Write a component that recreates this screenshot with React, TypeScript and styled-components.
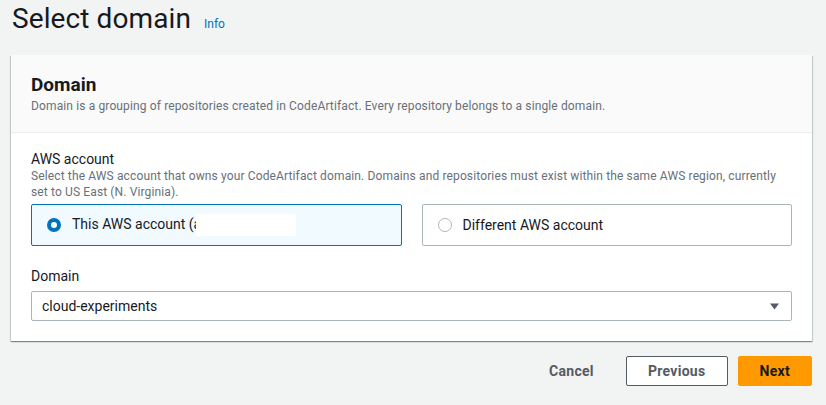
import React from 'react';
import styled, { createGlobalStyle } from 'styled-components';

const GlobalStyle = createGlobalStyle`
  body {
    margin: 0;
    background: #f2f3f3;
    font-family: Roboto, "Noto Sans", "Liberation Sans", sans-serif;
    color: #16191f;
  }
`;

const Page = styled.div`
  padding: 1px 14px 0 11px;
`;

const TitleRow = styled.div`
  display: flex;
  align-items: baseline;
  gap: 13px;
  margin: 0 0 18px 1px;
`;

const Title = styled.h1`
  margin: 0;
  font-size: 28px;
  line-height: 36px;
  font-weight: 400;
  letter-spacing: 0.1px;
  color: #16191f;
`;

const InfoLink = styled.a`
  font-size: 12px;
  color: #0073bb;
  text-decoration: none;
`;

const Card = styled.div`
  background: #ffffff;
  box-shadow: 0 1px 1px 0 rgba(0, 28, 36, 0.3), 1px 1px 1px 0 rgba(0, 28, 36, 0.15),
    -1px 1px 1px 0 rgba(0, 28, 36, 0.15);
`;

const CardHeader = styled.div`
  background: #fafafa;
  border-bottom: 1px solid #eaeded;
  padding: 19px 20px 18px;
`;

const CardTitle = styled.h2`
  margin: 0 0 2px;
  font-size: 19px;
  line-height: 22px;
  font-weight: 700;
`;

const Description = styled.p`
  margin: 0;
  font-size: 12px;
  line-height: 16px;
  letter-spacing: 0.13px;
  color: #687078;
`;

const CardBody = styled.div`
  padding: 17px 20px 20px;
`;

const Field = styled.div<{ $gap?: number }>`
  margin-top: ${({ $gap }) => $gap ?? 0}px;
`;

const Label = styled.div`
  font-size: 14px;
  line-height: 18px;
  color: #16191f;
`;

const Tiles = styled.div`
  display: grid;
  grid-template-columns: 1fr 1fr;
  gap: 20px;
  margin-top: 4px;
`;

const Tile = styled.label<{ $selected?: boolean }>`
  display: flex;
  align-items: center;
  gap: 11px;
  height: 40px;
  padding: 0 15px;
  border: 1px solid ${({ $selected }) => ($selected ? '#0073bb' : '#aab7b8')};
  background: ${({ $selected }) => ($selected ? '#f1faff' : '#ffffff')};
  border-radius: 2px;
  font-size: 14px;
  line-height: 20px;
  color: #16191f;
`;

const Masked = styled.span`
  display: inline-block;
  width: 100px;
  height: 22px;
  margin-left: -5px;
  background: #ffffff;
  vertical-align: middle;
`;

const SelectBox = styled.div`
  display: flex;
  align-items: center;
  justify-content: space-between;
  height: 28px;
  margin-top: 6px;
  padding: 0 12px 0 10px;
  border: 1px solid #aab7b8;
  border-radius: 2px;
  background: #ffffff;
  font-size: 14px;
  color: #16191f;
`;

const Actions = styled.div`
  display: flex;
  justify-content: flex-end;
  align-items: center;
  gap: 10px;
  margin-top: 15px;
`;

const Button = styled.button<{ $variant?: 'link' | 'normal' | 'primary' }>`
  height: 30px;
  padding: 0 21px;
  border-radius: 2px;
  font-family: inherit;
  font-size: 14px;
  font-weight: 700;
  letter-spacing: 0.3px;
  border: 1px solid
    ${({ $variant }) =>
      $variant === 'primary' ? '#ff9900' : $variant === 'normal' ? '#545b64' : 'transparent'};
  background: ${({ $variant }) =>
    $variant === 'primary' ? '#ff9900' : $variant === 'normal' ? '#ffffff' : 'transparent'};
  color: ${({ $variant }) => ($variant === 'primary' ? '#16191f' : '#545b64')};
`;

const Radio = ({ checked }: { checked?: boolean }) =>
  checked ? (
    <svg width="14" height="14" viewBox="0 0 14 14">
      <circle cx="7" cy="7" r="5" fill="#ffffff" stroke="#0073bb" strokeWidth="4" />
    </svg>
  ) : (
    <svg width="14" height="14" viewBox="0 0 14 14">
      <circle cx="7" cy="7" r="6.5" fill="#ffffff" stroke="#aab7b8" strokeWidth="1" />
    </svg>
  );

const Caret = () => (
  <svg width="9" height="7" viewBox="0 0 9 7">
    <path d="M0 0.5h9L4.5 6.5z" fill="#545b64" />
  </svg>
);

export default function App() {
  return (
    <>
      <GlobalStyle />
      <Page>
        <TitleRow>
          <Title>Select domain</Title>
          <InfoLink href="#">Info</InfoLink>
        </TitleRow>
        <Card>
          <CardHeader>
            <CardTitle>Domain</CardTitle>
            <Description>
              Domain is a grouping of repositories created in CodeArtifact. Every repository belongs to a
              single domain.
            </Description>
          </CardHeader>
          <CardBody>
            <Field>
              <Label>AWS account</Label>
              <Description>
                Select the AWS account that owns your CodeArtifact domain. Domains and repositories must
                exist within the same AWS region, currently set to US East (N. Virginia).
              </Description>
              <Tiles>
                <Tile $selected>
                  <Radio checked />
                  <span>
                    This AWS account (a<Masked />
                  </span>
                </Tile>
                <Tile>
                  <Radio />
                  <span>Different AWS account</span>
                </Tile>
              </Tiles>
            </Field>
            <Field $gap={21}>
              <Label>Domain</Label>
              <SelectBox>
                <span>cloud-experiments</span>
                <Caret />
              </SelectBox>
            </Field>
          </CardBody>
        </Card>
        <Actions>
          <Button $variant="link">Cancel</Button>
          <Button $variant="normal">Previous</Button>
          <Button $variant="primary">Next</Button>
        </Actions>
      </Page>
    </>
  );
}
